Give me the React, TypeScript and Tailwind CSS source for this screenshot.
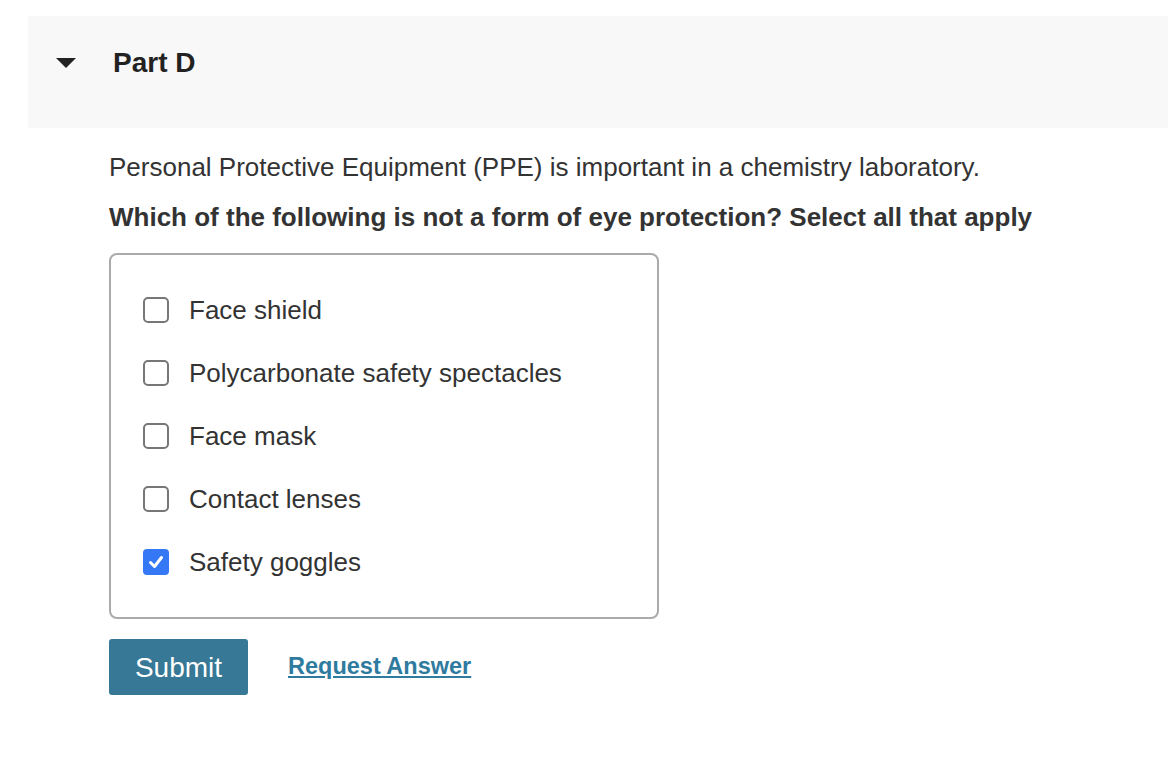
import { useState } from 'react'

const options = [
  'Face shield',
  'Polycarbonate safety spectacles',
  'Face mask',
  'Contact lenses',
  'Safety goggles',
]

export default function App() {
  const [checked, setChecked] = useState<boolean[]>([false, false, false, false, true])

  const toggle = (i: number) => {
    setChecked(checked.map((c, j) => (j === i ? !c : c)))
  }

  return (
    <div className="min-h-[760px] bg-white pt-4 pl-[28px] text-[#333]" style={{ fontFamily: '"Liberation Sans", Arial, sans-serif' }}>
      <div className="flex h-[112px] items-start bg-[#f8f8f8] pt-[30px]">
        <svg width="20" height="10" viewBox="0 0 20 10" className="ml-[28px] mt-[12px]">
          <path d="M0 0 H20 L10 10 Z" fill="#222" />
        </svg>
        <h2 className="ml-[37px] text-[28px] font-bold leading-[34px] text-[#222]">Part D</h2>
      </div>

      <div className="pl-[81px]">
        <p className="mt-[23px] text-[26px] leading-[32px]">
          Personal Protective Equipment (PPE) is important in a chemistry laboratory.
        </p>
        <p className="mt-[18px] text-[26px] font-bold leading-[32px]">
          Which of the following is not a form of eye protection? Select all that apply
        </p>

        <div className="mt-[20px] flex w-[550px] flex-col gap-[37px] rounded-[8px] border-2 border-[#aaa] px-[32px] py-[42px]">
          {options.map((o, i) => (
            <label key={o} className="flex h-[26px] cursor-pointer items-center gap-[20px]" onClick={() => toggle(i)}>
              {checked[i] ? (
                <span className="flex h-[26px] w-[26px] items-center justify-center rounded-[4px] bg-[#3478f6]">
                  <svg width="18" height="18" viewBox="0 0 18 18">
                    <path d="M3.5 9.5 L7.5 13.5 L14.5 4.5" fill="none" stroke="white" strokeWidth="3" strokeLinecap="round" strokeLinejoin="round" />
                  </svg>
                </span>
              ) : (
                <span className="h-[26px] w-[26px] rounded-[5px] border-2 border-[#777] bg-white" />
              )}
              <span className="text-[26px] leading-[30px]">{o}</span>
            </label>
          ))}
        </div>

        <div className="mt-[20px] flex items-center">
          <button className="h-[56px] w-[139px] rounded-[3px] bg-[#367896] pt-[2px] text-[28px] text-white">Submit</button>
          <a href="#" className="ml-[40px] text-[23.5px] font-bold text-[#2f7ba0] underline">Request Answer</a>
        </div>
      </div>
    </div>
  )
}
